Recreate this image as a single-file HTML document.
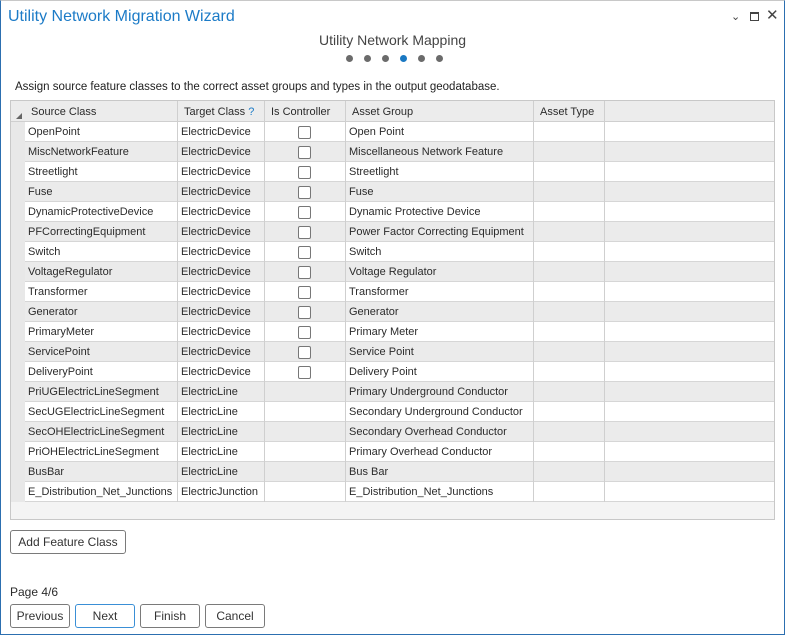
<!DOCTYPE html>
<html><head><style>
*{box-sizing:border-box;margin:0;padding:0}
body{width:785px;height:635px;background:#fff;font-family:"Liberation Sans",sans-serif;color:#2b2b2b;position:relative;overflow:hidden}
.win{position:absolute;left:0;top:0;width:785px;height:635px;border:1px solid #2c6fb0;border-top:1px solid #c8c8c8}
.title{position:absolute;left:8px;top:8px;font-size:16px;color:#1c7bc7}
.ctl{position:absolute;top:8px;font-size:13px;color:#444}
.sub{position:absolute;left:0;width:785px;top:32px;text-align:center;font-size:14px;color:#444}
.dot{position:absolute;top:55px;width:7px;height:7px;border-radius:50%;background:#6b6b6b}
.desc{position:absolute;left:15px;top:81px;font-size:11.5px;color:#222}
.tbl{position:absolute;left:10px;top:100px;width:765px;height:420px;border:1px solid #c8c8c8;background:#f4f4f4}
.gut{position:absolute;left:0;top:0;width:14px;height:401px;background:#e8e8e8}
.hdr{position:absolute;left:0;top:0;width:763px;height:21px;background:#ececec;border-bottom:1px solid #cfcfcf}
.c{position:absolute;font-size:11px;white-space:nowrap;overflow:hidden;height:20px;line-height:21px;padding-left:3px;border-right:1px solid #cfcfcf}
.row{position:absolute;left:14px;width:749px;height:20px;border-bottom:1px solid #d6d6d6}
.cb{position:absolute;left:288px;top:4px;width:13px;height:13px;border:1px solid #777;border-radius:2px;background:#fff}
.btn{position:absolute;height:24px;border:1px solid #7a7a7a;border-radius:3px;background:#fff;font-size:12px;text-align:center;line-height:22px;color:#333}
</style></head><body>
<div class="win"></div>
<div class="title">Utility Network Migration Wizard</div>
<div class="ctl" style="left:731px;font-size:11px;top:10px">&#8964;</div>
<div style="position:absolute;left:750px;top:12px;width:9px;height:9px;border:1px solid #444;border-top-width:2px"></div>
<div class="ctl" style="left:766px;top:6px;font-size:15px">✕</div>
<div class="sub">Utility Network Mapping</div>
<div class="dot" style="left:346px"></div><div class="dot" style="left:364px"></div><div class="dot" style="left:382px"></div><div class="dot" style="left:400px;background:#1a78c2"></div><div class="dot" style="left:418px"></div><div class="dot" style="left:436px"></div>
<div class="desc">Assign source feature classes to the correct asset groups and types in the output geodatabase.</div>
<div class="tbl">
<div class="gut"></div>
<div class="hdr">
<div style="position:absolute;left:5px;top:12px;width:0;height:0;border-left:6px solid transparent;border-bottom:6px solid #666"></div>
<div class="c" style="left:14px;width:153px;padding-left:6px;line-height:22px;height:21px">Source Class</div>
<div class="c" style="left:167px;width:87px;padding-left:6px;line-height:22px;height:21px">Target Class <span style="color:#1c7bc7">?</span></div>
<div class="c" style="left:254px;width:81px;padding-left:6px;line-height:22px;height:21px">Is Controller</div>
<div class="c" style="left:335px;width:188px;padding-left:6px;line-height:22px;height:21px">Asset Group</div>
<div class="c" style="left:523px;width:71px;padding-left:6px;line-height:22px;height:21px">Asset Type</div>
</div>
<div id="rows"></div>
</div>
<div class="btn" style="left:10px;top:530px;width:116px">Add Feature Class</div>
<div style="position:absolute;left:10px;top:585px;font-size:12px">Page 4/6</div>
<div class="btn" style="left:10px;top:604px;width:60px">Previous</div>
<div class="btn" style="left:75px;top:604px;width:60px;border-color:#3a8fd6">Next</div>
<div class="btn" style="left:140px;top:604px;width:60px">Finish</div>
<div class="btn" style="left:205px;top:604px;width:60px">Cancel</div>
<script>
var d=[["OpenPoint","ElectricDevice",1,"Open Point"],["MiscNetworkFeature","ElectricDevice",1,"Miscellaneous Network Feature"],["Streetlight","ElectricDevice",1,"Streetlight"],["Fuse","ElectricDevice",1,"Fuse"],["DynamicProtectiveDevice","ElectricDevice",1,"Dynamic Protective Device"],["PFCorrectingEquipment","ElectricDevice",1,"Power Factor Correcting Equipment"],["Switch","ElectricDevice",1,"Switch"],["VoltageRegulator","ElectricDevice",1,"Voltage Regulator"],["Transformer","ElectricDevice",1,"Transformer"],["Generator","ElectricDevice",1,"Generator"],["PrimaryMeter","ElectricDevice",1,"Primary Meter"],["ServicePoint","ElectricDevice",1,"Service Point"],["DeliveryPoint","ElectricDevice",1,"Delivery Point"],["PriUGElectricLineSegment","ElectricLine",0,"Primary Underground Conductor"],["SecUGElectricLineSegment","ElectricLine",0,"Secondary Underground Conductor"],["SecOHElectricLineSegment","ElectricLine",0,"Secondary Overhead Conductor"],["PriOHElectricLineSegment","ElectricLine",0,"Primary Overhead Conductor"],["BusBar","ElectricLine",0,"Bus Bar"],["E_Distribution_Net_Junctions","ElectricJunction",0,"E_Distribution_Net_Junctions"]];
var h="";d.forEach(function(r,i){var bg=i%2?"#ebebeb":"#fff";h+='<div class="row" style="top:'+(21+i*20)+'px;background:'+bg+'">'+
'<div class="c" style="left:0;width:153px">'+r[0]+'</div><div class="c" style="left:153px;width:87px">'+r[1]+'</div><div class="c" style="left:240px;width:81px"></div>'+(r[2]?'<div class="cb" style="left:273px"></div>':'')+
'<div class="c" style="left:321px;width:188px">'+r[3]+'</div><div class="c" style="left:509px;width:71px"></div></div>';});
document.getElementById("rows").innerHTML=h;
</script>
</body></html>
